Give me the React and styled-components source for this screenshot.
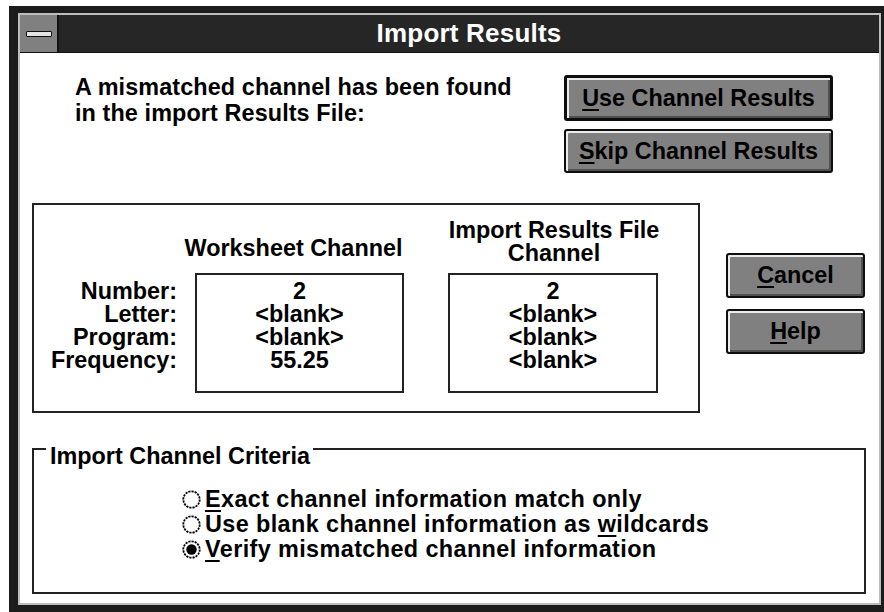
import React from 'react'
import styled, { createGlobalStyle } from 'styled-components'

const Global = createGlobalStyle`
  html, body {
    margin: 0;
    padding: 0;
    background: #ffffff;
    overflow: hidden;
  }
  body {
    font-family: 'Liberation Sans', Arial, sans-serif;
    font-weight: 700;
    color: #000;
  }
`

const Window = styled.div`
  width: 881px;
  height: 608px;
  margin: 6px 0 0 9px;
  box-sizing: border-box;
  border-style: solid;
  border-color: #1c1c1c;
  border-width: 7px 9px 9px 9px;
  display: flex;
`

const Inner = styled.div`
  flex: 1;
  display: flex;
  flex-direction: column;
  border: 2px solid #bdbdbd;
  background: #fff;
`

const Caption = styled.div`
  height: 38px;
  box-sizing: border-box;
  display: flex;
  background: #262626;
  border-bottom: 1px solid #111;
`

const SysMenu = styled.div`
  width: 37px;
  background: #808080;
  border-right: 2px solid #111;
  display: flex;
  align-items: center;
  justify-content: center;
`

const Dash = styled.div`
  width: 24px;
  height: 4px;
  background: #e4e4e4;
  border: 1px solid #111;
  border-radius: 1px;
`

const Title = styled.div`
  flex: 1;
  text-align: center;
  color: #fff;
  font-size: 26px;
  line-height: 36px;
  letter-spacing: 0.2px;
`

const Client = styled.div`
  flex: 1;
  display: flex;
  flex-direction: column;
  padding: 0 13px 0 12px;
`

const TopRow = styled.div`
  display: flex;
  align-items: flex-start;
  padding-top: 22px;
`

const Message = styled.p`
  margin: -1px 0 0 43px;
  font-size: 23.4px;
  line-height: 26px;
  letter-spacing: 0.1px;
`

const ButtonStack = styled.div`
  margin-left: auto;
  margin-right: ${p => p.$right}px;
  margin-top: ${p => p.$top || 0}px;
  display: flex;
  flex-direction: column;
  gap: ${p => p.$gap}px;
  width: ${p => p.$width}px;
`

const Button = styled.button`
  height: ${p => p.$height}px;
  box-sizing: border-box;
  font-family: 'Liberation Sans', Arial, sans-serif;
  font-weight: 700;
  font-size: 23.4px;
  color: #000;
  background: #808080;
  border: ${p => (p.$default ? 3 : 2)}px solid #0e0e0e;
  border-radius: 3px;
  box-shadow: inset 2px 2px 0 #ececec, inset -2px -2px 0 #505050;
  padding: 0;
  white-space: nowrap;

  u {
    text-decoration-thickness: 2px;
    text-underline-offset: 3px;
  }
`

const MiddleRow = styled.div`
  display: flex;
  align-items: flex-start;
  margin-top: 30px;
`

const ChannelBox = styled.div`
  width: 668px;
  height: 210px;
  box-sizing: border-box;
  border: 2px solid #222;
  display: flex;
  align-items: flex-end;
  padding: 0 0 18px 0;
`

const LabelList = styled.div`
  width: 143px;
  height: 120px;
  box-sizing: border-box;
  padding-top: 7px;
  text-align: right;
`

const Line = styled.div`
  height: 23px;
  font-size: 23.4px;
  line-height: 23px;
  white-space: nowrap;
`

const ChannelCol = styled.div`
  width: ${p => p.$width}px;
  margin-left: ${p => p.$gap}px;
  display: flex;
  flex-direction: column;
`

const ColHeader = styled.div`
  margin: 0 ${p => p.$mr}px ${p => p.$mb}px ${p => p.$ml}px;
  text-align: center;
`

const ValueBox = styled.div`
  height: 120px;
  box-sizing: border-box;
  border: 2px solid #222;
  padding-top: 5px;
  text-align: center;
`

const Group = styled.div`
  margin-top: 35px;
  height: 146px;
  box-sizing: border-box;
  border: 2px solid #222;
`

const Legend = styled.div`
  display: inline-block;
  margin: -7px 0 0 12px;
  padding: 0 3px 0 4px;
  background: #fff;
  font-size: 23.4px;
  line-height: 23px;
`

const RadioList = styled.div`
  margin: 19px 0 0 148px;
  display: flex;
  flex-direction: column;
`

const RadioRow = styled.label`
  display: flex;
  align-items: center;
  gap: 4px;
  height: 25px;
  font-size: 23.4px;
  letter-spacing: 0.4px;
  white-space: nowrap;

  svg {
    flex-shrink: 0;
  }

  u {
    text-decoration-thickness: 2px;
    text-underline-offset: 3px;
  }
`

function Radio({ checked }) {
  return (
    <svg width="19" height="19" viewBox="0 0 19 19">
      <circle cx="9.5" cy="9.5" r="8.2" fill="#fff" stroke="#000" strokeWidth="1.8" strokeDasharray="2.2 1" />
      {checked && <circle cx="9.5" cy="9.5" r="5.2" fill="#000" />}
    </svg>
  )
}

const labels = ['Number:', 'Letter:', 'Program:', 'Frequency:']
const worksheet = ['2', '<blank>', '<blank>', '55.25']
const imported = ['2', '<blank>', '<blank>', '<blank>']

export default function App() {
  return (
    <>
      <Global />
      <Window>
        <Inner>
          <Caption>
            <SysMenu>
              <Dash />
            </SysMenu>
            <Title>Import Results</Title>
          </Caption>
          <Client>
            <TopRow>
              <Message>
                A mismatched channel has been found
                <br />
                in the import Results File:
              </Message>
              <ButtonStack $right={33} $gap={8} $width={269}>
                <Button $default $height={46}><u>U</u>se Channel Results</Button>
                <Button $height={44}><u>S</u>kip Channel Results</Button>
              </ButtonStack>
            </TopRow>
            <MiddleRow>
              <ChannelBox>
                <LabelList>
                  {labels.map(l => <Line key={l}>{l}</Line>)}
                </LabelList>
                <ChannelCol $width={209} $gap={18}>
                  <ColHeader $ml={-32} $mr={-20} $mb={13}>
                    <Line>Worksheet Channel</Line>
                  </ColHeader>
                  <ValueBox>
                    {worksheet.map((v, i) => <Line key={i}>{v}</Line>)}
                  </ValueBox>
                </ChannelCol>
                <ChannelCol $width={210} $gap={44}>
                  <ColHeader $ml={-20} $mr={-22} $mb={8}>
                    <Line>Import Results File</Line>
                    <Line>Channel</Line>
                  </ColHeader>
                  <ValueBox>
                    {imported.map((v, i) => <Line key={i}>{v}</Line>)}
                  </ValueBox>
                </ChannelCol>
              </ChannelBox>
              <ButtonStack $right={1} $top={50} $gap={11} $width={139}>
                <Button $height={45}><u>C</u>ancel</Button>
                <Button $height={45}><u>H</u>elp</Button>
              </ButtonStack>
            </MiddleRow>
            <Group>
              <Legend>Import Channel Criteria</Legend>
              <RadioList>
                <RadioRow>
                  <Radio />
                  <span><u>E</u>xact channel information match only</span>
                </RadioRow>
                <RadioRow>
                  <Radio />
                  <span>Use blank channel information as <u>w</u>ildcards</span>
                </RadioRow>
                <RadioRow>
                  <Radio checked />
                  <span><u>V</u>erify mismatched channel information</span>
                </RadioRow>
              </RadioList>
            </Group>
          </Client>
        </Inner>
      </Window>
    </>
  )
}
